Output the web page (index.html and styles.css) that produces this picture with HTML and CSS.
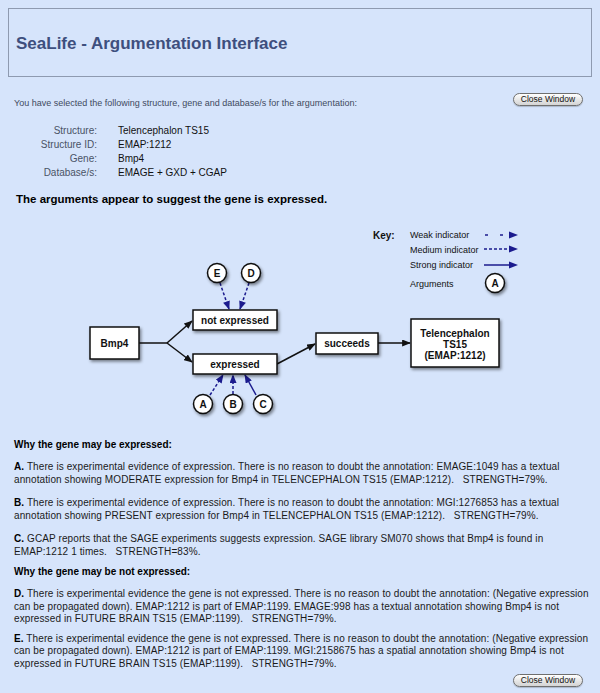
FILE: index.html
```html
<!DOCTYPE html>
<html>
<head>
<meta charset="utf-8">
<title>SeaLife - Argumentation Interface</title>
<link rel="stylesheet" href="styles.css">
</head>
<body>
<div class="header"><h1 class="title">SeaLife - Argumentation Interface</h1></div>

<div class="intro">
  <p class="intro-text">You have selected the following structure, gene and database/s for the argumentation:</p>
  <button class="close-btn" type="button">Close Window</button>
</div>

<dl class="selection">
  <dt>Structure:</dt><dd>Telencephalon TS15</dd>
  <dt>Structure ID:</dt><dd>EMAP:1212</dd>
  <dt>Gene:</dt><dd>Bmp4</dd>
  <dt>Database/s:</dt><dd>EMAGE + GXD + CGAP</dd>
</dl>

<h2 class="verdict">The arguments appear to suggest the gene is expressed.</h2>

<svg class="diagram" width="600" height="210" viewBox="0 210 600 210" xmlns="http://www.w3.org/2000/svg">
  <defs>
    <filter id="shadow" x="-30%" y="-30%" width="160%" height="170%">
      <feDropShadow dx="1.5" dy="2" stdDeviation="1.5" flood-color="#000" flood-opacity="0.45"/>
    </filter>
    <marker id="ah-black" viewBox="0 0 10 8" refX="9" refY="4" markerWidth="9" markerHeight="7" markerUnits="userSpaceOnUse" orient="auto">
      <path d="M0,0 L10,4 L0,8 z" fill="#111"/>
    </marker>
    <marker id="ah-blue" viewBox="0 0 10 8" refX="9" refY="4" markerWidth="9" markerHeight="7" markerUnits="userSpaceOnUse" orient="auto">
      <path d="M0,0 L10,4 L0,8 z" fill="#1b1b8e"/>
    </marker>
  </defs>

  <!-- Key -->
  <text class="key-title" x="373" y="238.5">Key:</text>
  <text class="key-label" x="410" y="238">Weak indicator</text>
  <text class="key-label" x="410" y="252.5">Medium indicator</text>
  <text class="key-label" x="410" y="268">Strong indicator</text>
  <text class="key-label" x="410" y="286.5">Arguments</text>
  <line class="blue" x1="485" y1="235" x2="488" y2="235"/>
  <line class="blue" x1="500" y1="235" x2="503" y2="235"/>
  <path d="M509,231.5 L518,235 L509,238.5 z" fill="#1b1b8e"/>
  <line class="blue dashed" x1="484" y1="249" x2="511" y2="249"/>
  <path d="M509,245.5 L518,249 L509,252.5 z" fill="#1b1b8e"/>
  <line class="blue" x1="484" y1="265" x2="511" y2="265"/>
  <path d="M509,261.5 L518,265 L509,268.5 z" fill="#1b1b8e"/>
  <circle class="node" cx="495" cy="283" r="9.5"/>
  <text class="node-text" x="495" y="286.5">A</text>

  <!-- Flow arrows -->
  <path class="black" d="M139,343 L167,343"/>
  <path class="black" d="M167,343 L192,321" marker-end="url(#ah-black)"/>
  <path class="black" d="M167,343 L192,362" marker-end="url(#ah-black)"/>
  <path class="black" d="M277,364 L315,344" marker-end="url(#ah-black)"/>
  <path class="black" d="M378,343 L410,343" marker-end="url(#ah-black)"/>

  <!-- Argument arrows -->
  <path class="blue dashed" d="M220,283 L229,309" marker-end="url(#ah-blue)"/>
  <path class="blue dashed" d="M249,283 L240,309" marker-end="url(#ah-blue)"/>
  <path class="blue dashed" d="M210,395 L223,375" marker-end="url(#ah-blue)"/>
  <path class="blue dashed" d="M233,394 L233,375" marker-end="url(#ah-blue)"/>
  <path class="blue" d="M256,395 L245,375" marker-end="url(#ah-blue)"/>

  <!-- Boxes -->
  <rect class="box" x="90" y="327" width="49" height="32"/>
  <text class="box-text" x="114.5" y="346.5">Bmp4</text>
  <rect class="box" x="193" y="310" width="84" height="20"/>
  <text class="box-text" x="235" y="323.5">not expressed</text>
  <rect class="box" x="193" y="354" width="84" height="20"/>
  <text class="box-text" x="235" y="367.5">expressed</text>
  <rect class="box" x="316" y="333" width="62" height="21"/>
  <text class="box-text" x="347" y="347">succeeds</text>
  <rect class="box" x="411" y="319" width="88" height="48"/>
  <text class="box-text" x="455" y="336.5">Telencephalon</text>
  <text class="box-text" x="455" y="347.5">TS15</text>
  <text class="box-text" x="455" y="358.5">(EMAP:1212)</text>

  <!-- Argument nodes -->
  <circle class="node" cx="217" cy="273" r="9.5"/>
  <text class="node-text" x="217" y="276.5">E</text>
  <circle class="node" cx="251" cy="273" r="9.5"/>
  <text class="node-text" x="251" y="276.5">D</text>
  <circle class="node" cx="203" cy="404" r="9.5"/>
  <text class="node-text" x="203" y="407.5">A</text>
  <circle class="node" cx="233" cy="404" r="9.5"/>
  <text class="node-text" x="233" y="407.5">B</text>
  <circle class="node" cx="263" cy="404" r="9.5"/>
  <text class="node-text" x="263" y="407.5">C</text>
</svg>

<section class="reasons">
  <h3 class="reasons-title">Why the gene may be expressed:</h3>
  <p><b>A.</b> There is experimental evidence of expression. There is no reason to doubt the annotation: EMAGE:1049 has a textual annotation showing MODERATE expression for Bmp4 in TELENCEPHALON TS15 (EMAP:1212). &nbsp;&nbsp;STRENGTH=79%.</p>
  <p><b>B.</b> There is experimental evidence of expression. There is no reason to doubt the annotation: MGI:1276853 has a textual annotation showing PRESENT expression for Bmp4 in TELENCEPHALON TS15 (EMAP:1212). &nbsp;&nbsp;STRENGTH=79%.</p>
  <p class="section-end"><b>C.</b> GCAP reports that the SAGE experiments suggests expression. SAGE library SM070 shows that Bmp4 is found in EMAP:1212 1 times. &nbsp;&nbsp;STRENGTH=83%.</p>
  <h3 class="reasons-title">Why the gene may be not expressed:</h3>
  <p class="tight"><b>D.</b> There is experimental evidence the gene is not expressed. There is no reason to doubt the annotation: (Negative expression can be propagated down). EMAP:1212 is part of EMAP:1199. EMAGE:998 has a textual annotation showing Bmp4 is not expressed in FUTURE BRAIN TS15 (EMAP:1199). &nbsp;&nbsp;STRENGTH=79%.</p>
  <p class="last"><b>E.</b> There is experimental evidence the gene is not expressed. There is no reason to doubt the annotation: (Negative expression can be propagated down). EMAP:1212 is part of EMAP:1199. MGI:2158675 has a spatial annotation showing Bmp4 is not expressed in FUTURE BRAIN TS15 (EMAP:1199). &nbsp;&nbsp;STRENGTH=79%.</p>
</section>

<div class="footer"><button class="close-btn" type="button">Close Window</button></div>
</body>
</html>
```

FILE: styles.css
```css
html, body {
  margin: 0;
  padding: 0;
  background: #d6e4fb;
}
body {
  font-family: "Liberation Sans", Arial, Helvetica, sans-serif;
  color: #1a1a1a;
  width: 600px;
  height: 693px;
  overflow: hidden;
}
.header {
  margin: 8px 8px 0 8px;
  height: 67px;
  border: 1px solid #8e9ab0;
  display: flex;
  align-items: center;
  padding-left: 7px;
}
.title {
  margin: 0;
  font-size: 17px;
  font-weight: bold;
  color: #3e4f7e;
  position: relative;
  top: 1px;
}
.intro {
  display: flex;
  justify-content: space-between;
  align-items: flex-start;
  margin-top: 16px;
  padding: 0 17px 0 14px;
}
.intro-text {
  margin: 4px 0 0 0;
  font-size: 9px;
  line-height: 12px;
  color: #3f4a5e;
}
.close-btn {
  width: 70px;
  height: 13px;
  padding: 0;
  margin: 0;
  font-family: "Liberation Sans", Arial, sans-serif;
  font-size: 8.5px;
  line-height: 11px;
  color: #111;
  border: 1px solid #6f6f6f;
  border-radius: 7px;
  background: linear-gradient(#ffffff, #e4e4e4 60%, #d4d4d4);
  box-shadow: 0 1px 1px rgba(0,0,0,0.2);
}
.selection {
  display: grid;
  grid-template-columns: 97px 1fr;
  column-gap: 21px;
  margin: 15px 0 0 0;
  font-size: 10px;
  line-height: 14px;
}
.selection dt {
  text-align: right;
  color: #4a5366;
}
.selection dd {
  margin: 0;
  color: #111;
}
.verdict {
  margin: 12px 0 0 16px;
  font-size: 11.5px;
  line-height: 14px;
  font-weight: bold;
  color: #000;
}
.diagram {
  display: block;
  margin-top: 4px;
}
.diagram text {
  font-family: "Liberation Sans", Arial, sans-serif;
}
.key-title {
  font-size: 10px;
  font-weight: bold;
  fill: #111;
}
.key-label {
  font-size: 9px;
  fill: #111;
}
.box {
  fill: #fff;
  stroke: #111;
  stroke-width: 1.5;
  filter: url(#shadow);
}
.box-text {
  font-size: 10px;
  font-weight: bold;
  text-anchor: middle;
  fill: #111;
}
.node {
  fill: #fff;
  stroke: #111;
  stroke-width: 1.5;
  filter: url(#shadow);
}
.node-text {
  font-size: 10px;
  font-weight: bold;
  text-anchor: middle;
  fill: #111;
}
.black {
  stroke: #111;
  stroke-width: 1.5;
  fill: none;
}
.blue {
  stroke: #1b1b8e;
  stroke-width: 1.5;
  fill: none;
}
.dashed {
  stroke-dasharray: 3 2;
}
.reasons {
  margin: 19px 0 0 0;
  padding: 0 7px 0 14px;
  font-size: 10px;
  line-height: 12.5px;
  letter-spacing: 0.1px;
  color: #1a1a1a;
}
.reasons-title {
  margin: 0 0 9.5px 0;
  font-size: 10px;
  line-height: 12.5px;
  font-weight: bold;
  letter-spacing: 0;
  color: #000;
}
.reasons p {
  margin: 0 0 11px 0;
}
.reasons p.section-end {
  margin-bottom: 8px;
}
.reasons p.tight {
  margin-bottom: 7px;
}
.reasons p.last {
  margin-bottom: 0;
}
.reasons b {
  color: #000;
}
.footer {
  display: flex;
  justify-content: flex-end;
  padding-right: 17px;
  margin-top: 4px;
}
```
